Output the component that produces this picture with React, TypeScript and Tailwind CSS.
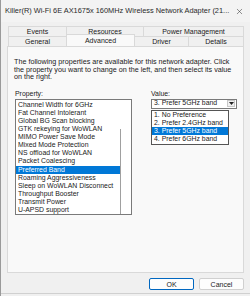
import { X } from "lucide-react";

const properties = [
  "Channel Width for 6GHz",
  "Fat Channel Intolerant",
  "Global BG Scan blocking",
  "GTK rekeying for WoWLAN",
  "MIMO Power Save Mode",
  "Mixed Mode Protection",
  "NS offload for WoWLAN",
  "Packet Coalescing",
  "Preferred Band",
  "Roaming Aggressiveness",
  "Sleep on WoWLAN Disconnect",
  "Throughput Booster",
  "Transmit Power",
  "U-APSD support",
];

const options = [
  "1. No Preference",
  "2. Prefer 2.4GHz band",
  "3. Prefer 5GHz band",
  "4. Prefer 6GHz band",
];

export default function App() {
  return (
    <div
      className="relative h-[296px] w-[250px] overflow-hidden border-l border-[#9a9a9a] bg-[#f0f0f0] text-[#1a1a1a]"
      style={{ fontFamily: '"Liberation Sans", Arial, sans-serif' }}
    >
      {/* title bar */}
      <div className="flex h-[22px] items-center justify-between bg-[#f3f3f3] pl-[4px] pr-[6px]">
        <span className="text-[7.4px] leading-none text-[#2a2a2a]">
          Killer(R) Wi-Fi 6E AX1675x 160MHz Wireless Network Adapter (21...
        </span>
        <X className="h-[9px] w-[9px] text-[#333]" strokeWidth={1.4} />
      </div>

      {/* tabs */}
      <div className="ml-[7px] mt-[4px] w-[236px] text-[7px] leading-none">
        <div className="flex h-[10px]">
          <div className="flex w-[59px] items-center justify-center border border-b-0 border-[#d9d9d9]">Events</div>
          <div className="flex w-[77px] items-center justify-center border border-b-0 border-l-0 border-[#d9d9d9]">Resources</div>
          <div className="flex flex-1 items-center justify-center border border-b-0 border-l-0 border-[#d9d9d9]">Power Management</div>
        </div>
        <div className="flex h-[10px] items-end">
          <div className="flex h-[10px] w-[59px] items-center justify-center border border-b-0 border-[#d9d9d9]">General</div>
          <div className="relative z-10 -mt-[2px] flex h-[12px] w-[68px] items-center justify-center border border-b-0 border-l-0 border-[#d9d9d9] bg-[#f9f9f9]">Advanced</div>
          <div className="flex h-[10px] w-[54px] items-center justify-center border border-b-0 border-l-0 border-[#d9d9d9]">Driver</div>
          <div className="flex h-[10px] flex-1 items-center justify-center border border-b-0 border-l-0 border-[#d9d9d9]">Details</div>
        </div>
      </div>

      {/* panel */}
      <div className="ml-[6px] h-[227px] w-[237px] border border-[#d9d9d9] bg-[#f9f9f9] px-[6px] pt-[11px] text-[6.9px]">
        <p className="pr-[4px] text-[7.2px] leading-[7.6px]">
          The following properties are available for this network adapter. Click the property you want to change on the left, and then select its value on the right.
        </p>

        <div className="mt-[9px] flex">
          <div className="ml-[1px] w-[117px]">
            <div className="leading-[7px]">Property:</div>
            <div className="mt-[2px] flex h-[116px] border border-[#7a7a7a] bg-white">
              <div className="flex-1 pt-[1px]">
                {properties.map((p) => (
                  <div
                    key={p}
                    className={
                      p === "Preferred Band"
                        ? "h-[8.1px] bg-[#0078d7] pl-[2px] leading-[8.1px] text-white"
                        : "h-[8.1px] pl-[2px] leading-[8.1px]"
                    }
                  >
                    {p}
                  </div>
                ))}
              </div>
              <div className="w-[11px] bg-white">
                <div className="mt-[29px] h-[85px] border-l border-[#a0a0a0]" />
              </div>
            </div>
          </div>

          <div className="ml-[19px] w-[86px]">
            <div className="leading-[7px]">Value:</div>
            <div className="mt-[2px] flex h-[10px] items-center border border-[#7a7a7a] bg-white pl-[2px]">
              <span className="flex-1 leading-none">3. Prefer 5GHz band</span>
              <div className="mr-[1px] flex h-[7px] w-[8px] items-center justify-center border border-[#c8c8c8] bg-[#f0f0f0]">
                <svg width="5" height="3" viewBox="0 0 5 3">
                  <path d="M0 0h5L2.5 3z" fill="#222" />
                </svg>
              </div>
            </div>
            <div className="mt-[1px] w-[78px] border border-[#555] bg-white py-[0.5px]">
              {options.map((o) => (
                <div
                  key={o}
                  className={
                    o.startsWith("3.")
                      ? "h-[8px] bg-[#0078d7] pl-[2px] leading-[8px] text-white"
                      : "h-[8px] pl-[2px] leading-[8px]"
                  }
                >
                  {o}
                </div>
              ))}
            </div>
          </div>
        </div>
      </div>

      {/* buttons */}
      <div className="mr-[6px] mt-[5px] flex justify-end gap-[5px] text-[7px]">
        <button className="h-[12px] w-[45px] rounded-[2px] border border-[#0067c0] bg-[#fdfdfd] leading-none">OK</button>
        <button className="h-[12px] w-[45px] rounded-[2px] border border-[#d0d0d0] bg-[#fdfdfd] leading-none">Cancel</button>
      </div>

      <div className="absolute bottom-[2px] left-0 right-0 border-t border-[#d0d0d0]" />
    </div>
  );
}
